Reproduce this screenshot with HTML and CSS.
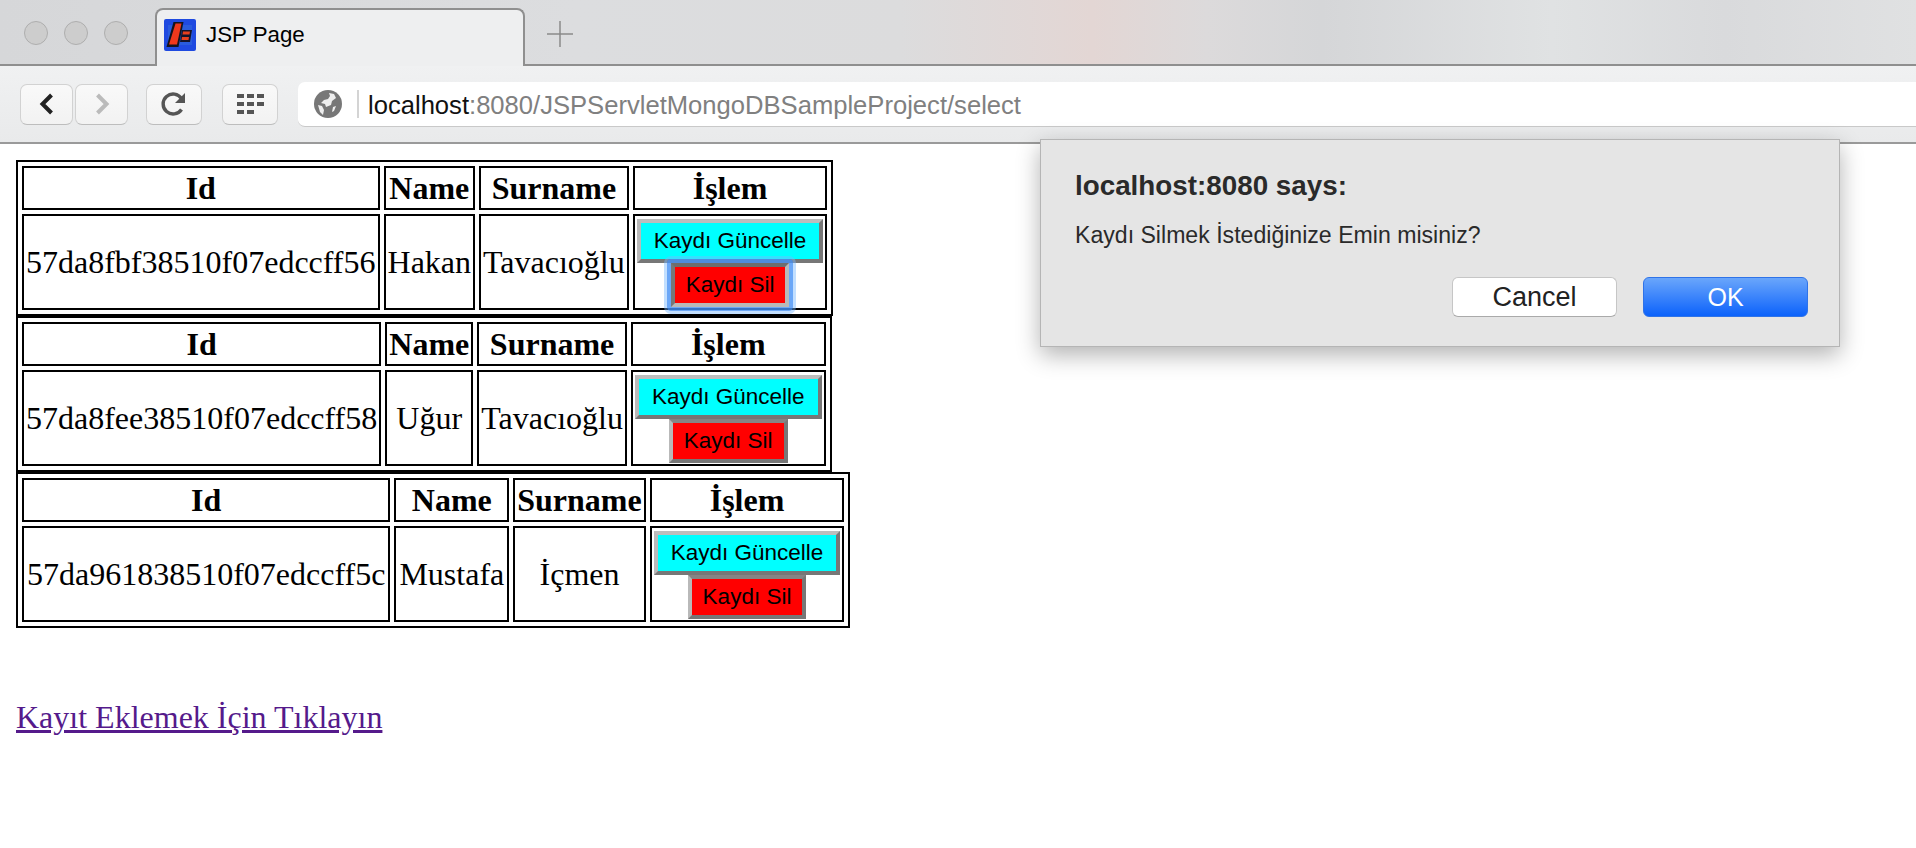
FILE: index.html
```html
<!DOCTYPE html>
<html>
<head>
    <meta charset="utf-8" />
    <title>JSP Page</title>
    <link rel="stylesheet" href="styles.css">
</head>
<body>
    <div class="tabstrip">
        <div class="lights">
            <span></span>
            <span></span>
            <span></span>
        </div>
        <div class="tab">
            <svg class="favicon" width="32" height="32" viewBox="0 0 32 32">
                <rect width="32" height="32" rx="2" fill="#1f4ae0"/>
                <path d="M4 6h24v20H4z" fill="#2a5cdc"/>
                <path d="M9.500 3h10l-5 25H2.500z" fill="#14141e"/>
                <path d="M11.500 4.500h6l-4.500 21H5z" fill="#f0381c"/>
                <path d="M18 11h10l-2 12h-10z" fill="#14142a"/>
                <path d="M19 12.500h7l-.5 3h-7zM18 18h7l-.5 3h-7z" fill="#e8401e"/>
            </svg>
            <span>JSP Page</span>
        </div>
        <svg class="newtab" width="28" height="28" viewBox="0 0 28 28">
            <path d="M14 1v26M1 14h26" stroke="#8a8a8a" stroke-width="1.500"/>
        </svg>
    </div>

    <div class="toolbar">
        <div class="navpair">
            <button class="toolbtn back">
                <svg width="20" height="24" viewBox="0 0 20 24"><path d="M14.500 3 5.500 12l9 9" fill="none" stroke="#222" stroke-width="4"/></svg>
            </button>
            <button class="toolbtn forward">
                <svg width="20" height="24" viewBox="0 0 20 24"><path d="M5.500 3l9 9-9 9" fill="none" stroke="#bbb" stroke-width="4"/></svg>
            </button>
        </div>
        <button class="toolbtn reload">
            <svg width="28" height="28" viewBox="0 0 28 28">
                <path d="M21.500 19.500a10 10 0 1 1 0-11" fill="none" stroke="#555" stroke-width="3.400"/>
                <path d="M25 3v10h-10z" fill="#555"/>
            </svg>
        </button>
        <button class="toolbtn apps">
            <svg width="27" height="20" viewBox="0 0 27 20">
                <path d="M0 0h7v4H0zM10 0h7v4h-7zM20 0h7v4h-7zM0 8h7v4H0zM10 8h7v4h-7zM20 8h7v4h-7zM0 16h7v4H0zM10 16h7v4h-7z" fill="#555"/>
            </svg>
        </button>
        <div class="omnibox">
            <svg class="globe" width="28" height="28" viewBox="0 0 28 28">
                <circle cx="14" cy="14" r="14" fill="#777"/>
                <path d="M15 3l5 1 2 4-4 3-1 4-5 2-1-3-4-1 3-3 4-1 2-3z" fill="#eee"/>
                <path d="M4 15l4 1 2 4-1 5-3-3z" fill="#eee"/>
                <path d="M19 17l3-1-2 5-2 1z" fill="#eee"/>
            </svg>
            <span class="omni-sep"></span>
            <span class="url">localhost<span class="url-rest">:8080/JSPServletMongoDBSampleProject/select</span></span>
        </div>
    </div>

    <div class="page">
        <table class="records">
            <tr><th>Id</th><th>Name</th><th>Surname</th><th>İşlem</th></tr>
            <tr>
                <td>57da8fbf38510f07edccff56</td>
                <td>Hakan</td>
                <td>Tavacıoğlu</td>
                <td class="actions">
                    <button class="update">Kaydı Güncelle</button>
                    <button class="delete focused">Kaydı Sil</button>
                </td>
            </tr>
        </table>
        <table class="records">
            <tr><th>Id</th><th>Name</th><th>Surname</th><th>İşlem</th></tr>
            <tr>
                <td>57da8fee38510f07edccff58</td>
                <td>Uğur</td>
                <td>Tavacıoğlu</td>
                <td class="actions">
                    <button class="update">Kaydı Güncelle</button>
                    <button class="delete">Kaydı Sil</button>
                </td>
            </tr>
        </table>
        <table class="records">
            <tr><th>Id</th><th>Name</th><th>Surname</th><th>İşlem</th></tr>
            <tr>
                <td class="wide">57da961838510f07edccff5c</td>
                <td class="wide">Mustafa</td>
                <td>İçmen</td>
                <td class="actions">
                    <button class="update">Kaydı Güncelle</button>
                    <button class="delete">Kaydı Sil</button>
                </td>
            </tr>
        </table>
        <a class="addlink" href="#">Kayıt Eklemek İçin Tıklayın</a>
    </div>

    <div class="dialog">
        <div class="dialog-title">localhost:8080 says:</div>
        <div class="dialog-msg">Kaydı Silmek İstediğinize Emin misiniz?</div>
        <div class="dialog-btns">
            <button class="cancel">Cancel</button>
            <button class="ok">OK</button>
        </div>
    </div>
</body>
</html>
```

FILE: styles.css
```css
body {
    margin: 0;
    background-color: white;
    color: black;
    font-family: "Liberation Serif", serif;
    overflow: hidden;
}

/* browser window */
.tabstrip {
    height: 66px;
    box-sizing: border-box;
    display: flex;
    align-items: flex-start;
    background: linear-gradient(90deg, #d6d7d9 0%, #dcdddf 30%, #dcdcdd 47%, #e3d6d4 57%, #dcdadb 63%, #d5d6d8 69%, #e0e2e3 81%, #d9dadc 90%, #e0e1e2 100%);
    border-bottom: 2px solid #8f8f8f;
}
.lights {
    display: flex;
    gap: 16px;
    padding: 21px 0 0 24px;
    width: 155px;
    box-sizing: border-box;
}
.lights > span {
    width: 24px;
    height: 24px;
    box-sizing: border-box;
    border-radius: 50%;
    background: #cdcdcd;
    border: 1px solid #aeaeae;
}
.tab {
    display: flex;
    align-items: center;
    gap: 10px;
    width: 370px;
    height: 58px;
    margin-top: 8px;
    padding: 0 0 6px 7px;
    box-sizing: border-box;
    background: #eeeff0;
    border: 2px solid #8f8f8f;
    border-bottom: none;
    border-radius: 8px 8px 0 0;
    font: 22.300px "Liberation Sans", sans-serif;
}
.newtab {
    margin: 20px 0 0 21px;
}
.toolbar {
    height: 78px;
    display: flex;
    align-items: center;
    box-sizing: border-box;
    padding-left: 20px;
    background: linear-gradient(#f0f1f2, #e9eaeb);
    border-bottom: 2px solid #9a9a9a;
}
.navpair {
    display: flex;
    gap: 2px;
}
.toolbtn {
    display: flex;
    align-items: center;
    justify-content: center;
    padding: 0;
    height: 41px;
    width: 56px;
    box-sizing: border-box;
    background: linear-gradient(#f9f9f9, #f2f2f2);
    border: 1px solid #d2d2d2;
    border-bottom-color: #bdbdbd;
    border-radius: 7px;
}
.back, .forward {
    width: 53px;
}
.reload {
    margin-left: 18px;
}
.apps {
    margin-left: 20px;
}
.omnibox {
    display: flex;
    align-items: center;
    flex: 1;
    height: 44px;
    margin-left: 20px;
    padding-left: 16px;
    background: white;
    border-bottom: 1px solid #c9c9c9;
    border-radius: 7px 0 0 7px;
    font: 25.600px "Liberation Sans", sans-serif;
}
.omni-sep {
    width: 2px;
    height: 28px;
    margin: 0 9px 0 15px;
    background: #d4d4d4;
}
.url {
    color: #111;
    padding-top: 4px;
}
.url-rest {
    color: #808080;
}

/* page content */
.page {
    padding: 16px 16px 0;
}
.records {
    border: 2px solid black;
    border-spacing: 4px;
    font-size: 32px;
    text-align: center;
}
.records th,
.records td {
    border: 2px solid black;
    padding: 1px 2px;
}
.records th {
    padding-top: 2px;
}
.records td.wide {
    padding: 1px 3px;
}
.records td.actions {
    padding: 3px 2px 1px;
}
.actions > button {
    display: block;
    margin: 0 auto;
    font: 22.500px "Liberation Sans", sans-serif;
    color: black;
    padding: 0 13px;
    height: 44px;
    box-sizing: border-box;
    border: 4px solid;
    border-color: #bdbdbd #777 #777 #b9b9b9;
}
.update {
    background: cyan;
}
.actions > .delete {
    padding: 0 11px;
    background: red;
    border-top-color: #858585;
}
.actions > .focused {
    position: relative;
    border-color: #6e6e6e #b9b9b9 #b9b9b9 #777;
}
.focused::after {
    content: "";
    position: absolute;
    top: -8px;
    left: -8px;
    right: -8px;
    bottom: -8px;
    border: 4px solid rgba(70, 145, 245, .8);
    border-radius: 4px;
    box-shadow: 0 0 0 3px rgba(120, 185, 255, .45);
}
.addlink {
    display: inline-block;
    margin-top: 71px;
    font-size: 32px;
    color: #551a8b;
}

/* alert box */
.dialog {
    position: absolute;
    left: 1040px;
    top: 139px;
    width: 800px;
    height: 208px;
    box-sizing: border-box;
    padding: 32px 31px 0 34px;
    background: #e5e5e5;
    border: 1px solid #b5b5b5;
    box-shadow: 0 8px 22px rgba(0, 0, 0, .3);
    font-family: "Liberation Sans", sans-serif;
    color: #2a2a2a;
}
.dialog-title {
    font-size: 27.800px;
    font-weight: bold;
    line-height: 28px;
}
.dialog-msg {
    margin-top: 22px;
    font-size: 23.100px;
    line-height: 26px;
}
.dialog-btns {
    display: flex;
    justify-content: flex-end;
    gap: 26px;
    margin-top: 29px;
}
.dialog-btns > button {
    width: 165px;
    height: 40px;
    border-radius: 6px;
    font: 25px "Liberation Sans", sans-serif;
}
.dialog-btns > .cancel {
    font-size: 27px;
    background: white;
    color: #222;
    border: 1px solid #c6c6c6;
    border-bottom-color: #aaa;
}
.ok {
    background: linear-gradient(#6aa6fb, #0c62fb);
    color: white;
    border: 1px solid #2f73e8;
}
```
